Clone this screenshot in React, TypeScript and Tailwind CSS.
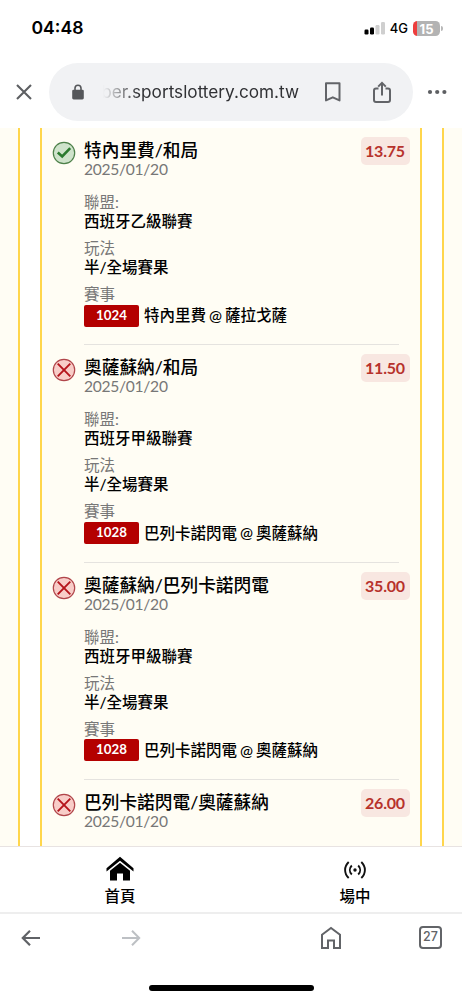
import React from "react";

type Bet = {
  won: boolean;
  title: string;
  odds: string;
  league: string;
  code: string;
  match: [string, string];
};

const bets: Bet[] = [
  { won: true, title: "特內里費/和局", odds: "13.75", league: "西班牙乙級聯賽", code: "1024", match: ["特內里費", "薩拉戈薩"] },
  { won: false, title: "奧薩蘇納/和局", odds: "11.50", league: "西班牙甲級聯賽", code: "1028", match: ["巴列卡諾閃電", "奧薩蘇納"] },
  { won: false, title: "奧薩蘇納/巴列卡諾閃電", odds: "35.00", league: "西班牙甲級聯賽", code: "1028", match: ["巴列卡諾閃電", "奧薩蘇納"] },
  { won: false, title: "巴列卡諾閃電/奧薩蘇納", odds: "26.00", league: "西班牙甲級聯賽", code: "1028", match: ["巴列卡諾閃電", "奧薩蘇納"] },
];

function ResultIcon({ won }: { won: boolean }) {
  return won ? (
    <svg width="24" height="24" viewBox="0 0 24 24" fill="none">
      <circle cx="12" cy="12" r="10.7" fill="#cfe3cb" stroke="#4d8049" strokeWidth="1.2" />
      <path d="M5.8 11.5l4.4 4L18.2 7.2" stroke="#2b7a2e" strokeWidth="2.6" />
    </svg>
  ) : (
    <svg width="24" height="24" viewBox="0 0 24 24" fill="none">
      <circle cx="12" cy="12" r="10.7" fill="#f8cdc8" stroke="#b0454a" strokeWidth="1.2" />
      <path d="M5.7 5.7l12.6 12.6M18.3 5.7L5.7 18.3" stroke="#b5141b" strokeWidth="1.9" />
    </svg>
  );
}

function BetItem({ bet }: { bet: Bet }) {
  return (
    <article className="flex h-[217.4px] shrink-0 pl-[9.5px] pr-[10.5px]">
      <div className="w-[32.5px] shrink-0 pt-[13px]">
        <ResultIcon won={bet.won} />
      </div>
      <div className="flex min-w-0 flex-1 flex-col">
        <header className="flex justify-between pt-[9px]">
          <h2 className="mt-[3px] h-[21px] whitespace-nowrap text-[17.7px] leading-[21px] font-medium text-black">{bet.title}</h2>
          <span className="-mb-2 flex h-7 w-[49px] shrink-0 items-center justify-center rounded-[5px] bg-[#f8e7e1] text-[16px] font-bold tracking-[-0.2px] text-[#b7322c]">{bet.odds}</span>
        </header>
        <p className="-mt-px h-[18px] text-[15.6px] leading-[18px] tracking-[-0.28px] text-[#777]">2025/01/20</p>
        <dl className="mt-[14px] flex flex-1 flex-col text-[15.5px]">
          <dt className="h-5 leading-5 text-[#777]">聯盟:</dt>
          <dd className="h-[18px] leading-[18px] font-medium text-black">{bet.league}</dd>
          <dt className="mt-2 h-5 leading-5 text-[#777]">玩法</dt>
          <dd className="h-[18px] leading-[18px] font-medium text-black">半/全場賽果</dd>
          <dt className="mt-2 h-5 leading-5 text-[#777]">賽事</dt>
          <dd className="mt-[0.5px] flex h-[22px] items-center whitespace-nowrap font-medium text-black">
            <span className="mr-[5px] flex h-[22px] w-[55px] items-center justify-center rounded-[2px] bg-[#b40000] text-[13.3px] font-bold text-white">{bet.code}</span>
            <span className="pt-px">{bet.match[0]}</span>
            <span className="mx-[3px] pb-px text-[15.5px] leading-5">@</span>
            <span className="pt-px">{bet.match[1]}</span>
          </dd>
        </dl>
        <div className="mr-[11px] h-px bg-[#e5e3df]" />
      </div>
    </article>
  );
}

function StatusBar() {
  return (
    <div className="flex h-[56px] shrink-0 items-center justify-between pl-[31.5px] pr-[19px]">
      <time className="font-['Inter','Liberation_Sans',sans-serif] text-[17.6px] font-semibold text-black">04:48</time>
      <div className="flex items-center font-['Inter','Liberation_Sans',sans-serif]">
        <svg width="22" height="14" viewBox="0 0 22 14">
          <rect x="0.5" y="8.5" width="4" height="5" rx="1.2" fill="#000" />
          <rect x="6" y="6.5" width="4" height="7" rx="1.2" fill="#000" />
          <rect x="11.5" y="4" width="4" height="9.5" rx="1.2" fill="#cfcfcf" />
          <rect x="17" y="1" width="4" height="12.5" rx="1.2" fill="#cfcfcf" />
        </svg>
        <span className="ml-1 text-[13px] leading-4 font-medium text-black">4G</span>
        <div className="ml-[5px] flex h-[15px] w-[27px] items-center justify-center rounded-[4.5px] bg-linear-to-r from-[#ed3e3d] from-15% to-[#b3b3b3] to-15% pt-px text-[13px] leading-[14px] font-bold text-white">15</div>
        <div className="ml-px h-[5px] w-[2px] rounded-r-full bg-[#b8b8b8]" />
      </div>
    </div>
  );
}

function AddressBar() {
  return (
    <div className="flex h-[72px] shrink-0 items-center pb-[1px]">
      <svg className="ml-4 mr-[17px]" width="16" height="16" viewBox="0 0 16 16" fill="none" stroke="#5d5f62" strokeWidth="2.1">
        <path d="M1 1l14 14M15 1L1 15" />
      </svg>
      <div className="flex h-[58px] w-[364px] items-center rounded-full bg-[#f1f2f4]">
        <svg className="ml-[23px] shrink-0" width="12" height="16" viewBox="0 0 12 16">
          <path d="M3 7V4.2a3 3 0 0 1 6 0V7" fill="none" stroke="#55575a" strokeWidth="1.6" />
          <rect x="0.2" y="5.7" width="11.6" height="9.7" rx="1.4" fill="#55575a" />
        </svg>
        <div className="ml-[19px] flex w-[196px] justify-end overflow-hidden whitespace-nowrap font-['Inter','Liberation_Sans',sans-serif] text-[17.2px] text-[#303134] [mask-image:linear-gradient(to_right,transparent,black_36px)]">
          ber.sportslottery.com.tw
        </div>
        <svg className="ml-[24.5px] shrink-0" width="18" height="22" viewBox="0 0 18 22" fill="none" stroke="#626468" strokeWidth="2">
          <path d="M2 2.2h13.5v17.2L8.8 16.3 2 19.4z" strokeLinejoin="round" />
        </svg>
        <svg className="ml-[30px] shrink-0" width="20" height="24" viewBox="0 0 20 24" fill="none" stroke="#626468" strokeWidth="2">
          <path d="M6.500 8.500H4a2 2 0 0 0-2 2V20a2 2 0 0 0 2 2h12a2 2 0 0 0 2-2v-9.500a2 2 0 0 0-2-2h-2.500" />
          <path d="M10 15.500V3M6.200 6.600L10 2.800l3.800 3.800" />
        </svg>
      </div>
      <svg className="ml-[14px]" width="20" height="6" viewBox="0 0 20 6" fill="#5d5f62">
        <circle cx="3" cy="3" r="2.1" />
        <circle cx="10.2" cy="3" r="2.1" />
        <circle cx="17.4" cy="3" r="2.1" />
      </svg>
    </div>
  );
}

function SiteNav() {
  return (
    <nav className="flex h-[66px] shrink-0 border-t border-[#e8e3e2] bg-white text-[15.5px] font-medium text-black">
      <a className="flex w-[240px] shrink-0 flex-col items-center pt-[9px]">
        <svg width="28" height="26" viewBox="0 0 28 26">
          <path d="M0.5 12.2L14 0.8l13.500 11.400v3.300L14 4.800.5 15.500z" />
          <path d="M4 14.700L14 6.700l10 8V24.500h-7V17.500h-6v7H4z" />
        </svg>
        <span className="mt-[3px] h-[22px] leading-[22px]">首頁</span>
      </a>
      <a className="flex flex-1 flex-col items-center pt-[13px] pl-2">
        <svg width="22" height="20" viewBox="0 0 22 20" fill="none" stroke="#111" strokeWidth="1.9">
          <path d="M4.7 2C-.1 6.6-.1 13.4 4.7 18M17.3 2c4.8 4.6 4.8 11.4 0 16M7.8 5.5c-2.6 2.6-2.6 6.4 0 9M14.2 5.5c2.6 2.6 2.6 6.4 0 9" />
          <circle cx="11" cy="10" r="1.7" fill="#111" stroke="none" />
        </svg>
        <span className="mt-[5px] h-[22px] leading-[22px]">場中</span>
      </a>
    </nav>
  );
}

function BrowserToolbar() {
  return (
    <footer className="flex h-[88px] shrink-0 flex-col items-center border-t-2 border-[#eeeeee] bg-white">
      <div className="flex h-[47px] w-full items-center justify-between pl-[21px] pr-[20px]">
        <div className="flex gap-20">
          <svg width="20" height="18" viewBox="0 0 20 18" fill="none" stroke="#606266" strokeWidth="2.2">
            <path d="M19 9H2M9 1.8L1.8 9 9 16.2" />
          </svg>
          <svg width="20" height="18" viewBox="0 0 20 18" fill="none" stroke="#bdc0c4" strokeWidth="2">
            <path d="M1 9h17M11 1.8L18.2 9 11 16.2" />
          </svg>
        </div>
        <div className="flex items-center gap-[77.5px]">
          <svg width="22" height="24" viewBox="0 0 22 24" fill="none" stroke="#626468" strokeWidth="2">
            <path d="M2 8.700L11 2l9 6.700V22h-6v-7.500H8V22H2z" />
          </svg>
          <div className="flex size-[23px] items-center justify-center rounded-[4px] border-2 border-[#626468] font-['Inter','Liberation_Sans',sans-serif] text-[12.5px] font-medium text-[#626468]">27</div>
        </div>
      </div>
      <div className="mt-[24px] h-[6px] w-[165px] rounded-full bg-black" />
    </footer>
  );
}

export default function App() {
  return (
    <div className="flex h-[1000px] w-[462px] flex-col overflow-hidden bg-white font-['Lato','Noto_Sans_CJK_TC',sans-serif]">
      <StatusBar />
      <AddressBar />
      <main className="flex min-h-0 flex-1 bg-[#fffdf4]">
        <div className="w-[18px] shrink-0" />
        <div className="flex w-[426px] justify-center overflow-hidden border-x-2 border-[#ffd64c] bg-white">
          <div className="flex w-[382px] flex-col overflow-hidden border-x-2 border-[#ffd64c] bg-[#fffdf4]">
            {bets.map((bet) => (
              <BetItem key={bet.title} bet={bet} />
            ))}
          </div>
        </div>
      </main>
      <SiteNav />
      <BrowserToolbar />
    </div>
  );
}
